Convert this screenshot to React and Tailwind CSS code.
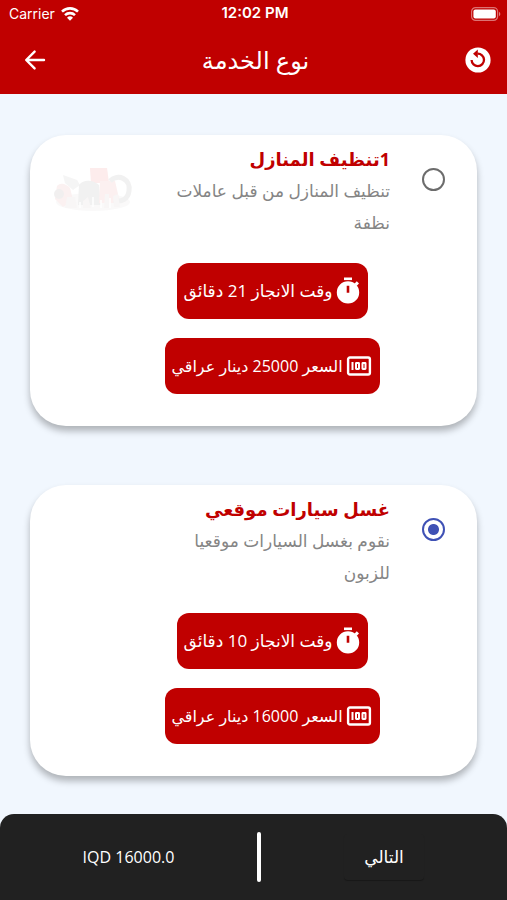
import { useState } from "react";

const services = [
  {
    id: "home",
    title: "1تنظيف المنازل",
    lines: ["تنظيف المنازل من قبل عاملات", "نظفة"],
    time: "وقت الانجاز 21 دقائق",
    price: "السعر 25000 دينار عراقي",
    picture: true,
  },
  {
    id: "car",
    title: "غسل سيارات موقعي",
    lines: ["نقوم بغسل السيارات موقعيا", "للزبون"],
    time: "وقت الانجاز 10 دقائق",
    price: "السعر 16000 دينار عراقي",
    picture: false,
  },
];

function WifiIcon() {
  return (
    <svg viewBox="0 0 18 14" className="h-[14px] w-[18px]" fill="none" stroke="white" strokeWidth="2.6">
      <path d="M1 4.6a11.6 11.6 0 0 1 16 0" />
      <path d="M4 8.1a7.3 7.3 0 0 1 10 0" />
      <path d="M9 13.8 6 10.7a4.3 4.3 0 0 1 6 0Z" fill="white" stroke="none" />
    </svg>
  );
}

function BatteryIcon() {
  return (
    <svg viewBox="0 0 30 14" className="h-[14px] w-[30px]">
      <rect x="0.6" y="0.6" width="26" height="12.8" rx="4" fill="none" stroke="white" strokeOpacity=".45" strokeWidth="1.2" />
      <rect x="2.4" y="2.4" width="22.4" height="9.2" rx="2" fill="white" />
      <path d="M28 4.8c1.8.8 1.8 3.6 0 4.4Z" fill="white" fillOpacity=".5" />
    </svg>
  );
}

function BackIcon() {
  return (
    <svg viewBox="0 0 22 22" className="size-[22px]" fill="none" stroke="white" strokeWidth="2.4" strokeLinecap="round" strokeLinejoin="round">
      <path d="M20 11H2.6M10.600 2.600 2.200 11l8.400 8.400" />
    </svg>
  );
}

function ReplayIcon() {
  return (
    <svg viewBox="0 0 26 26" className="size-[26px]">
      <circle cx="13" cy="13" r="12.6" fill="white" />
      <path d="M12.500 6.700a6.200 6.200 0 1 1-5.900 6.300" fill="none" stroke="#c00000" strokeWidth="2.3" />
      <path d="M12.800 2.600v8.400L8 6.800Z" fill="#c00000" />
    </svg>
  );
}

function TimerIcon() {
  return (
    <svg viewBox="0 0 24 28" className="h-7 w-6 shrink-0" fill="white">
      <rect x="8" y="0.500" width="8" height="2.600" />
      <path d="m18.400 6.800 2.400-2.600 2.200 2.200-2.400 2.600Z" />
      <path fillRule="evenodd" d="M12 4.200a11.200 11.200 0 1 0 0 22.400 11.200 11.200 0 0 0 0-22.400Zm-1.300 4.500h2.600v7h-2.600Z" />
    </svg>
  );
}

function MoneyIcon() {
  return (
    <svg viewBox="0 0 26 22" className="h-[22px] w-[26px] shrink-0" fill="none" stroke="white">
      <rect x="2.100" y="2.500" width="21.800" height="17" rx="1.800" strokeWidth="2.400" />
      <path d="M6.500 7v8" strokeWidth="2" />
      <rect x="10" y="8" width="3" height="6" rx=".4" strokeWidth="2" />
      <rect x="16.500" y="8" width="3" height="6" rx=".4" strokeWidth="2" />
    </svg>
  );
}

function CleaningPicture() {
  return (
    <svg viewBox="0 0 80 52" className="mt-8 h-[52px] w-20 opacity-60" aria-hidden="true">
      <ellipse cx="40" cy="35" rx="37" ry="9" fill="#f7f6f6" />
      <path d="M10 8 24 13l3 5-7 5-8-7Z" fill="#f0efef" />
      <path d="M4 19c4-4 9-2 13 2l3 12-10 7-8-8Z" fill="#fae8e8" />
      <circle cx="6" cy="27" r="5" fill="#e8e6e6" />
      <path d="M37 1h17l2 15H38Z" fill="#fce0e0" />
      <path d="M26 18c5-6 14-5 20 0l2 20H25Z" fill="#e8e8e8" />
      <path d="M47 14h15l5 22H46Z" fill="#fbe7e7" />
      <path d="M57 14c8-8 21-2 19 10-1 8-8 12-15 9" fill="none" stroke="#e9e8e8" strokeWidth="5" />
      <path d="M14 30h8l2 11H12ZM30 34l5-4 3 11h-8ZM52 27h4v14h-5ZM60 29l5-2 2 13h-6Z" fill="#f5f1f1" />
      <path d="M27 35v6M40 30v10M48 33v8M57 31v10" stroke="#fff" strokeWidth="1.500" />
    </svg>
  );
}

function ServiceCard({ service, selected, onSelect }) {
  return (
    <article className="grid min-h-[291px] grid-cols-[87px_1fr_125px] rounded-[36px] bg-white pb-8 shadow-[0_5px_7px_rgba(0,0,0,0.28)]">
      <div className="flex justify-center pt-[33px]">
        <input
          type="radio"
          name="service"
          id={service.id}
          checked={selected}
          onChange={onSelect}
          className="size-[23px] appearance-none rounded-full border-2 border-[#6c6c6c] bg-white checked:border-[#3f51b5] checked:bg-[radial-gradient(circle,#3f51b5_5px,white_6px)]"
        />
      </div>
      <div className="flex flex-col items-center">
        <div className="w-full whitespace-nowrap">
          <label htmlFor={service.id} className="mt-2 block text-[18px] leading-8 font-bold text-[#c00000]">
            {service.title}
          </label>
          <p className="text-[17px] leading-8 text-[#858585]">
            {service.lines.map((line) => (
              <span key={line} className="block">{line}</span>
            ))}
          </p>
        </div>
        <div className="mt-6 flex h-14 items-center gap-[3px] rounded-[12px] bg-[#c00000] pr-2 pl-[6px] text-[17px] whitespace-nowrap text-white">
          <TimerIcon />
          <span>{service.time}</span>
        </div>
        <div className="mt-[19px] flex h-14 items-center gap-[3px] rounded-[12px] bg-[#c00000] pr-2 pl-[6px] text-[16px] whitespace-nowrap text-white">
          <MoneyIcon />
          <span>{service.price}</span>
        </div>
      </div>
      <div className="flex justify-center">{service.picture && <CleaningPicture />}</div>
    </article>
  );
}

export default function App() {
  const [selected, setSelected] = useState("car");
  return (
    <div dir="rtl" className="flex min-h-screen flex-col bg-[#f1f7fe] font-['Open_Sans','DejaVu_Sans',sans-serif]">
      <header className="h-[94px] bg-[#c00000] text-white">
        <div dir="ltr" className="grid h-[27px] grid-cols-3 items-center pr-[6px] pl-[9px] font-['Inter',sans-serif] text-[14px]">
          <div className="flex items-center gap-[6px]">
            <span>Carrier</span>
            <WifiIcon />
          </div>
          <span className="text-center text-[15px] font-semibold">12:02 PM</span>
          <div className="flex justify-end"><BatteryIcon /></div>
        </div>
        <div className="flex h-[66px] items-center justify-between pr-4 pl-6">
          <button type="button" aria-label="تحديث"><ReplayIcon /></button>
          <h1 className="text-[24px]">نوع الخدمة</h1>
          <button type="button" aria-label="رجوع"><BackIcon /></button>
        </div>
      </header>
      <main className="flex flex-1 flex-col gap-[59px] px-[30px] pt-[41px] pb-[38px]">
        {services.map((service) => (
          <ServiceCard
            key={service.id}
            service={service}
            selected={selected === service.id}
            onSelect={() => setSelected(service.id)}
          />
        ))}
      </main>
      <footer className="grid h-[86px] grid-cols-[246fr_4px_257fr] items-center rounded-t-[14px] bg-[#212121] text-[16px] text-white">
        <button type="button" className="mx-auto h-[46px] w-20 rounded-sm text-[17px] shadow-[0_1px_1px_rgba(0,0,0,0.3)]">التالي</button>
        <div className="h-[50px] rounded-full bg-white" />
        <span dir="ltr" className="text-center">IQD 16000.0</span>
      </footer>
    </div>
  );
}
